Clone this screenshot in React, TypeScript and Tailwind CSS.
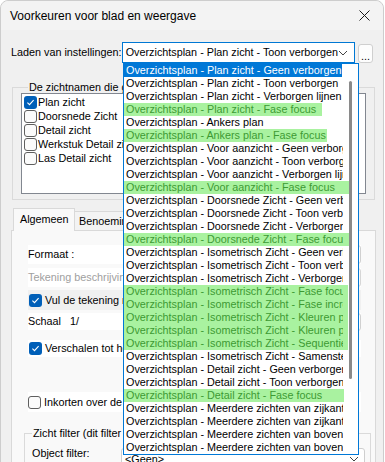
import React from 'react';

type Item = { t: string; g?: string };

const items: Item[] = [
  { t: 'Overzichtsplan - Plan zicht - Geen verborgen' },
  { t: 'Overzichtsplan - Plan zicht - Toon verborgen' },
  { t: 'Overzichtsplan - Plan zicht - Verborgen lijnen' },
  { t: 'Overzichtsplan - Plan zicht - Fase focus', g: 'w-[198px]' },
  { t: 'Overzichtsplan - Ankers plan' },
  { t: 'Overzichtsplan - Ankers plan - Fase focus', g: 'w-[203px]' },
  { t: 'Overzichtsplan - Voor aanzicht - Geen verborgen' },
  { t: 'Overzichtsplan - Voor aanzicht - Toon verborgen' },
  { t: 'Overzichtsplan - Voor aanzicht - Verborgen lijnen' },
  { t: 'Overzichtsplan - Voor aanzicht - Fase focus', g: 'w-[226px]' },
  { t: 'Overzichtsplan - Doorsnede Zicht - Geen verborgen' },
  { t: 'Overzichtsplan - Doorsnede Zicht - Toon verborgen' },
  { t: 'Overzichtsplan - Doorsnede Zicht - Verborgen lijnen' },
  { t: 'Overzichtsplan - Doorsnede Zicht - Fase focus', g: 'w-[226px]' },
  { t: 'Overzichtsplan - Isometrisch Zicht - Geen verborgen' },
  { t: 'Overzichtsplan - Isometrisch Zicht - Toon verborgen' },
  { t: 'Overzichtsplan - Isometrisch Zicht - Verborgen lijnen' },
  { t: 'Overzichtsplan - Isometrisch Zicht - Fase focus', g: 'w-[224px]' },
  { t: 'Overzichtsplan - Isometrisch Zicht - Fase increment', g: 'w-[224px]' },
  { t: 'Overzichtsplan - Isometrisch Zicht - Kleuren per fase', g: 'w-[224px]' },
  { t: 'Overzichtsplan - Isometrisch Zicht - Kleuren per lot', g: 'w-[224px]' },
  { t: 'Overzichtsplan - Isometrisch Zicht - Sequentie', g: 'w-[224px]' },
  { t: 'Overzichtsplan - Isometrisch Zicht - Samenstelling' },
  { t: 'Overzichtsplan - Detail zicht - Geen verborgen' },
  { t: 'Overzichtsplan - Detail zicht - Toon verborgen' },
  { t: 'Overzichtsplan - Detail zicht - Fase focus', g: 'w-[220px]' },
  { t: 'Overzichtsplan - Meerdere zichten van zijkant' },
  { t: 'Overzichtsplan - Meerdere zichten van zijkant' },
  { t: 'Overzichtsplan - Meerdere zichten van boven' },
  { t: 'Overzichtsplan - Meerdere zichten van boven' },
];

const views = ['Plan zicht', 'Doorsnede Zicht', 'Detail zicht', 'Werkstuk Detail zicht', 'Las Detail zicht'];

function Check({ on }: { on?: boolean }) {
  if (on) {
    return (
      <span className="flex h-[13px] w-[13px] shrink-0 items-center justify-center rounded-[3px] bg-[#005fb8]">
        <svg width="9" height="9" viewBox="0 0 9 9">
          <path d="M1.4 4.7 L3.5 6.7 L7.6 2.2" fill="none" stroke="white" strokeWidth="1.1" />
        </svg>
      </span>
    );
  }
  return <span className="h-[13px] w-[13px] shrink-0 rounded-[3px] border border-[#5f5f5f] bg-[#fbfbfb]" />;
}

function Chevron() {
  return (
    <svg width="10" height="6" viewBox="0 0 10 6">
      <path d="M1 1 L5 5 L9 1" fill="none" stroke="#444" strokeWidth="1" />
    </svg>
  );
}

export default function App() {
  return (
    <div className="relative h-[462px] w-[385px] overflow-hidden bg-white font-['Liberation_Sans',Arial,sans-serif] text-[10.8px] text-black">
      <div className="flex h-[480px] w-[384px] flex-col rounded-t-[8px] border border-[#cdcdcd] bg-[#f0f0f0]">
        {/* Title bar */}
        <div className="flex h-[29px] shrink-0 items-center justify-between rounded-t-[8px] bg-[#f3f3f3] pl-[9px] pr-[13px]">
          <span className="text-[12px]">Voorkeuren voor blad en weergave</span>
          <svg width="11" height="11" viewBox="0 0 11 11">
            <path d="M0.5 0.5 L10.5 10.5 M10.5 0.5 L0.5 10.5" stroke="#1a1a1a" strokeWidth="1" />
          </svg>
        </div>

        <div className="flex flex-col px-[10px] pt-[12px]">
          {/* Laden van instellingen */}
          <div className="flex items-start">
            <span className="w-[112px] pt-[4px] leading-[13px]">Laden van instellingen:</span>
            <div className="flex h-[21px] w-[236px] items-center justify-between border border-[#0078d4] bg-white pl-[3px] pr-[6px]">
              <span className="whitespace-nowrap">Overzichtsplan - Plan zicht - Toon verborgen</span>
              <Chevron />
            </div>
            <div className="ml-[3px] mt-[2px] flex h-[19px] w-[15px] items-end justify-center rounded-[3px] border border-[#cfcfcf] bg-[#fdfdfd] pb-[2px] leading-[8px]">
              ...
            </div>
          </div>

          {/* De zichtnamen group */}
          <fieldset className="ml-[1px] mt-[18px] w-[362px] border border-[#dadada] px-[8px] pb-[5px]">
            <legend className="ml-[7px] px-[1px] leading-[12px]">De zichtnamen die getoond worden in het zicht</legend>
            <div className="h-[101px] w-[345px] border border-[#828790] bg-white pl-[2px] pt-[1px]">
              {views.map((v, i) => (
                <div key={v} className="flex h-[14px] items-center gap-[1px]">
                  <Check on={i === 0} />
                  <span className="leading-[14px]">{v}</span>
                </div>
              ))}
            </div>
          </fieldset>

          {/* Tabs */}
          <div className="ml-[2px] mt-[8px] flex h-[22px] items-end">
            <div className="relative z-10 -mb-px h-[23px] w-[62px] border border-b-0 border-[#d9d9d9] bg-[#f9f9f9] pl-[6px] leading-[20px]">
              Algemeen
            </div>
            <div className="h-[19px] w-[90px] border border-b-0 border-l-0 border-[#d9d9d9] bg-[#f3f3f3] pl-[4px] leading-[19px]">
              Benoeming
            </div>
          </div>

          <div className="h-[260px] w-[365px] border border-[#d9d9d9] bg-[#f9f9f9] pl-[16px] pt-[14px]">
            <div className="flex h-[19px] w-[333px] items-center bg-white">
              <span>Formaat :</span>
              <div className="ml-auto h-[19px] w-[140px] rounded-[3px] border border-[#d0d0d0] bg-white" />
            </div>
            <div className="mt-[4px] flex h-[19px] w-[333px] items-center bg-white">
              <span className="text-[#a0a0a0]">Tekening beschrijving</span>
              <div className="ml-auto h-[19px] w-[140px] rounded-[3px] border border-[#d6d6d6] bg-[#fbfbfb]" />
            </div>
            <div className="mt-[3px] flex h-[20px] w-[333px] items-center gap-[3px] bg-[#f0f0f0] pl-[1px]">
              <Check on />
              <span>Vul de tekening met het zicht</span>
            </div>
            <div className="mt-[3px] flex h-[17px] w-[333px] items-center bg-white">
              <span>Schaal</span>
              <span className="ml-[9px]">1/</span>
              <div className="ml-auto h-[18px] w-[140px] rounded-[3px] border border-[#d0d0d0] bg-white" />
            </div>
            <div className="mt-[10px] flex h-[17px] w-[333px] items-center gap-[3px] bg-white pl-[1px]">
              <Check on />
              <span>Verschalen tot het tekenblad</span>
            </div>
            <div className="mt-[35px] flex h-[20px] w-[333px] items-center gap-[3px] bg-white">
              <Check />
              <span>Inkorten over de lengte</span>
            </div>

            <fieldset className="-ml-[4px] mt-[15px] h-[60px] w-[347px] border border-[#dadada] pl-[7px]">
              <legend className="px-[1px] leading-[12px]">Zicht filter (dit filter wordt toegepast op het zicht)</legend>
              <div className="mt-[8px] flex items-start">
                <span className="w-[89px] leading-[13px]">Object filter:</span>
                <div className="mt-[1px] flex h-[22px] w-[244px] items-center justify-between rounded-[3px] border border-[#cfcfcf] bg-white pl-[3px] pr-[5px]">
                  <span>&lt;Geen&gt;</span>
                  <Chevron />
                </div>
              </div>
            </fieldset>
          </div>
        </div>
      </div>

      {/* Open dropdown list */}
      <div className="absolute left-[123px] top-[63px] h-[392px] w-[236px] border border-[#0078d7] bg-white">
        {items.map((it, i) => {
          if (i === 0) {
            return (
              <div key={i} className="h-[13px] w-[218px] bg-[#0078d7] leading-[13px] text-white">
                <div className="w-[219px] overflow-hidden whitespace-nowrap pl-[2px]">{it.t}</div>
              </div>
            );
          }
          if (it.g) {
            return (
              <div key={i} className={`h-[13px] bg-[#a9f2a0] leading-[13px] text-[#3d9a33] ${it.g}`}>
                <div className="w-[219px] overflow-hidden whitespace-nowrap pl-[2px]">{it.t}</div>
              </div>
            );
          }
          return (
            <div key={i} className="h-[13px] leading-[13px]">
              <div className="w-[219px] overflow-hidden whitespace-nowrap pl-[2px]">{it.t}</div>
            </div>
          );
        })}
        <div className="absolute left-[225px] top-[17px] h-[298px] w-[3px] rounded-full bg-[#8a8a8a]" />
      </div>
    </div>
  );
}
